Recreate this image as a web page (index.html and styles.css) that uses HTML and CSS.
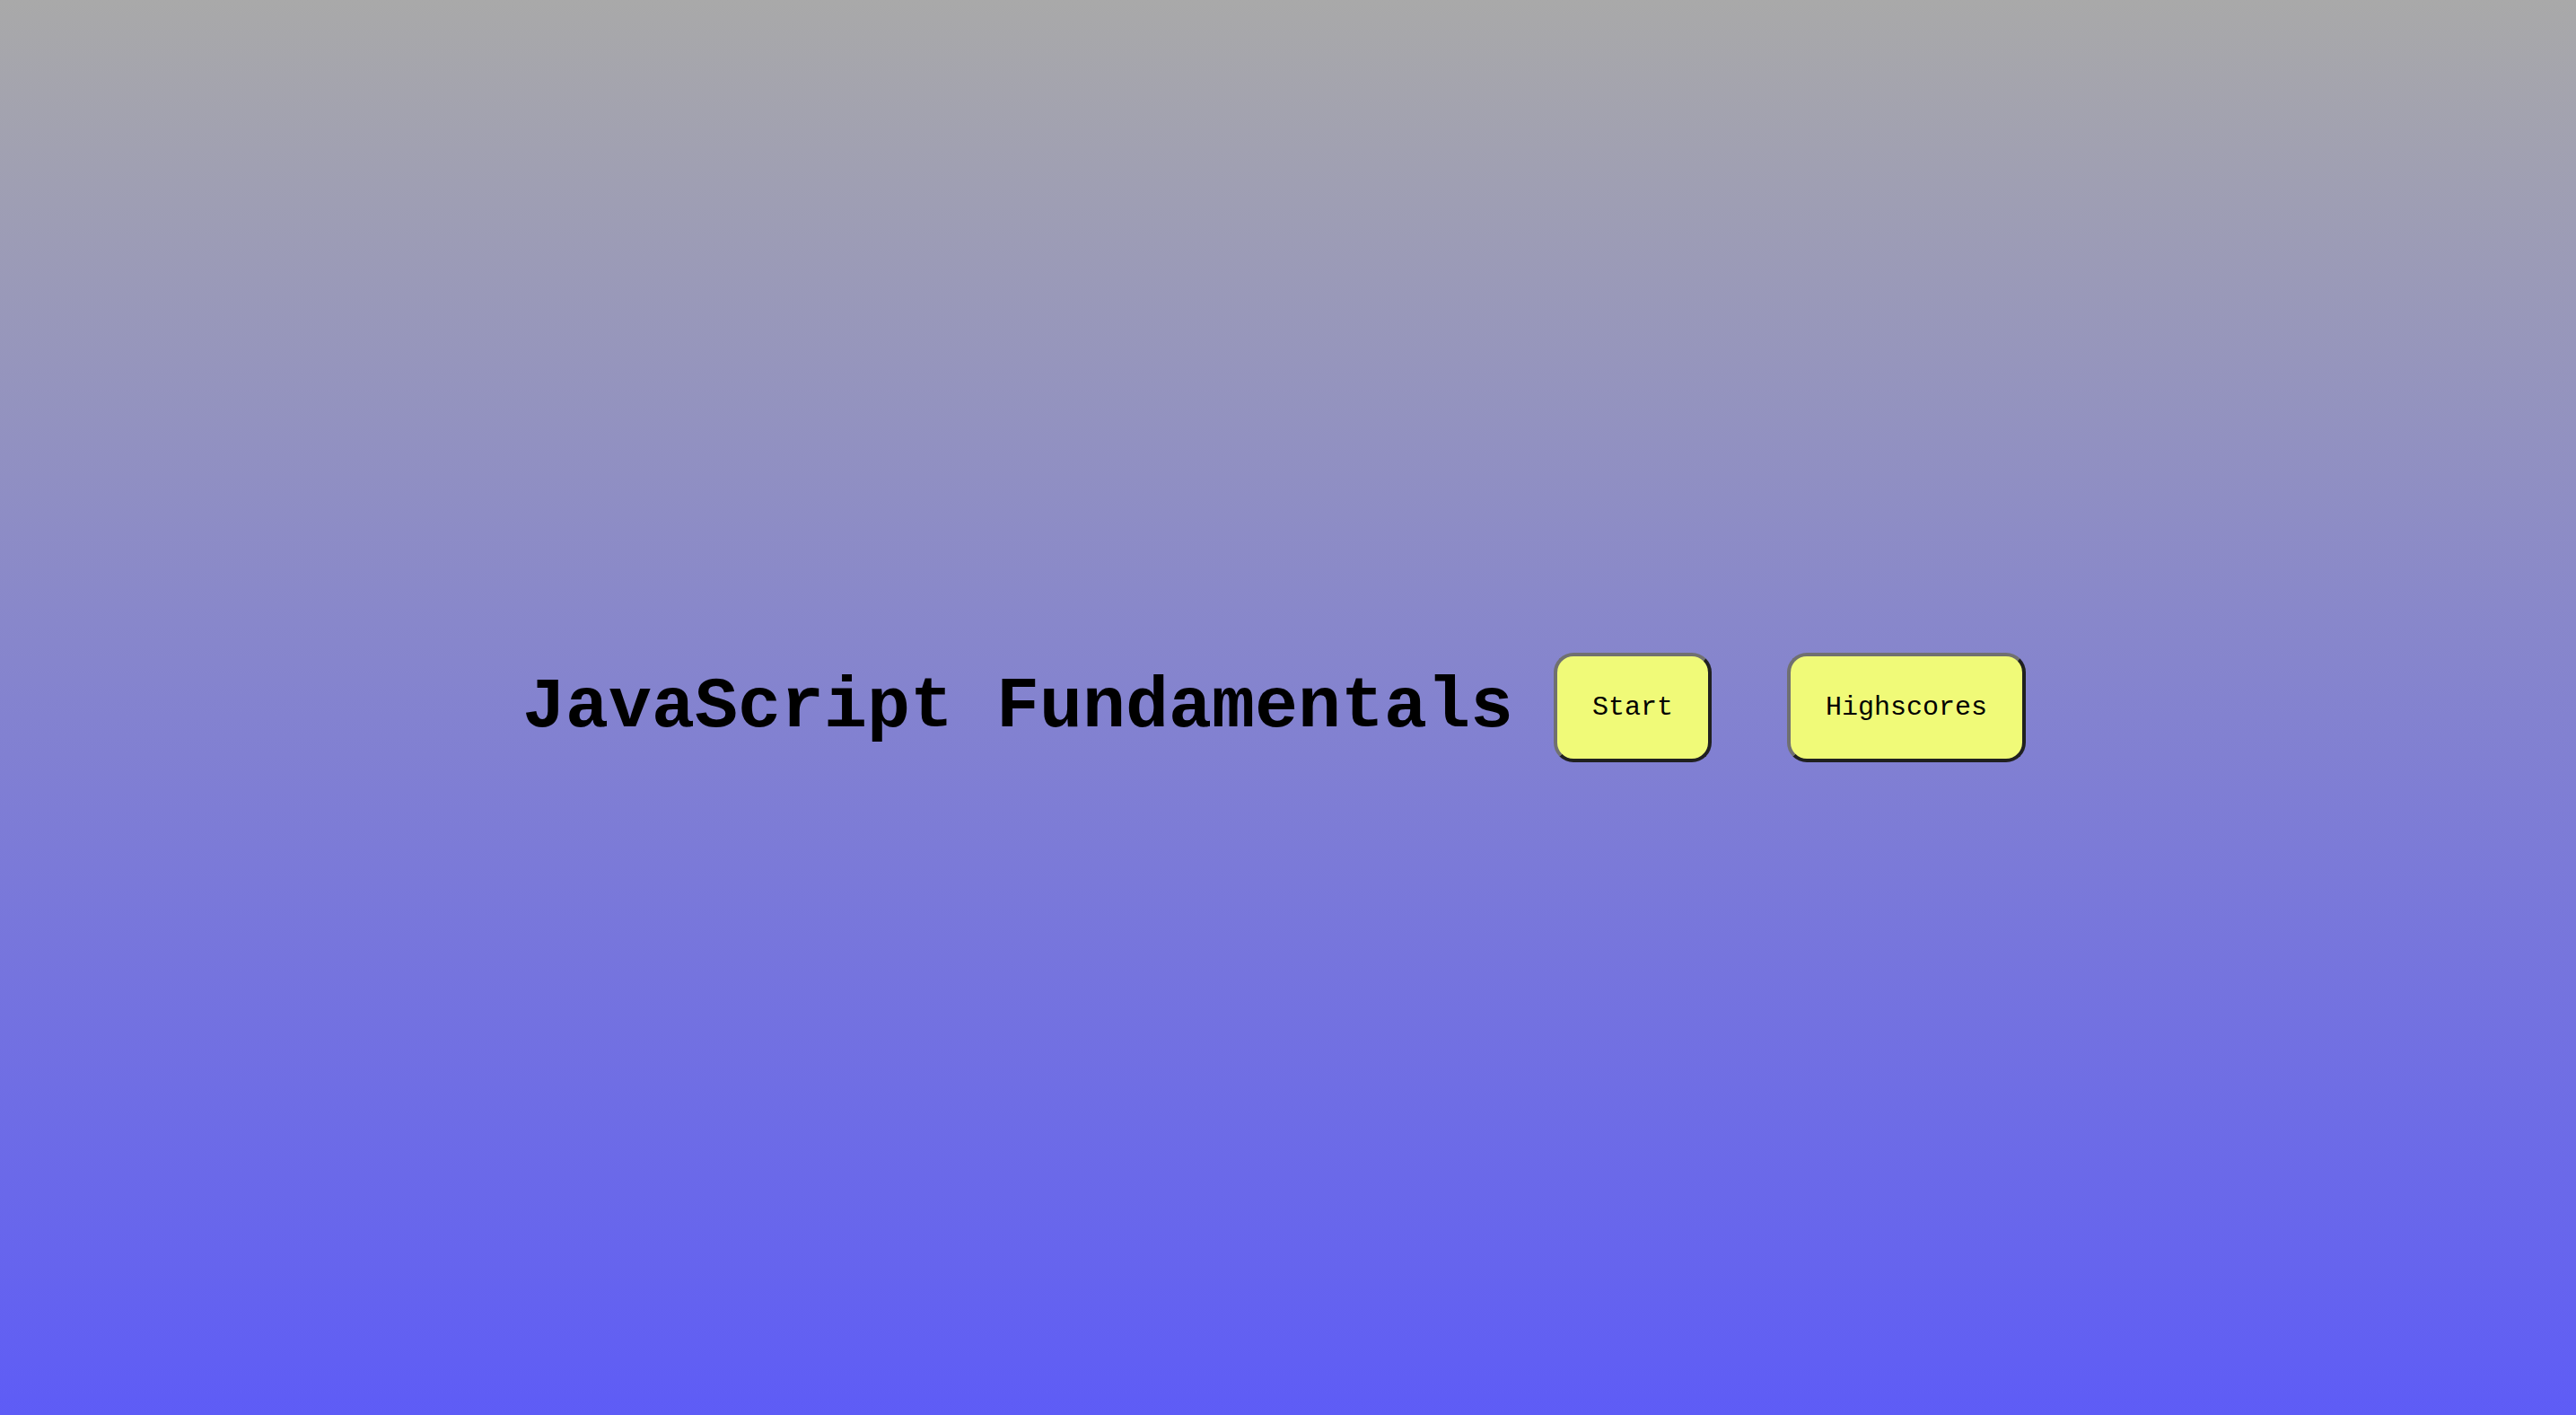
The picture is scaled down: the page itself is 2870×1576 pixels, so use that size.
FILE: index.html
```html
<!DOCTYPE html>
<html lang="en">
<head>
<meta charset="utf-8">
<title>JavaScript Fundamentals</title>
<link rel="stylesheet" href="styles.css">
</head>
<body>
<main class="home">
  <h1 class="title">JavaScript Fundamentals</h1>
  <button class="btn btn-start">Start</button>
  <button class="btn btn-scores">Highscores</button>
</main>
</body>
</html>
```
FILE: styles.css
```css
html, body {
  margin: 0;
  padding: 0;
  height: 100%;
}
body {
  background: linear-gradient(to bottom, #a9a9a9 0%, #5e5cf6 100%);
  font-family: "Courier New", Courier, "Nimbus Mono PS", "Nimbus Mono L", FreeMono, "Liberation Mono", monospace;
  color: #000;
}
.home {
  min-height: 100vh;
  display: flex;
  align-items: center;
  justify-content: center;
  padding-right: 31px;
  box-sizing: border-box;
}
.title {
  margin: 0;
  font-size: 80px;
  font-weight: bold;
  line-height: 1.15;
}
.btn {
  font-family: "Courier New", Courier, "Nimbus Mono PS", "Nimbus Mono L", FreeMono, "Liberation Mono", monospace;
  font-size: 30px;
  line-height: 34px;
  color: #000;
  background: #f0fa78;
  padding: 40px 39px;
  border: 4px solid;
  border-color: #707070 #202020 #202020 #707070;
  border-radius: 22px;
  cursor: pointer;
}
.btn-start {
  margin-left: 45px;
}
.btn-scores {
  margin-left: 84px;
}
```
